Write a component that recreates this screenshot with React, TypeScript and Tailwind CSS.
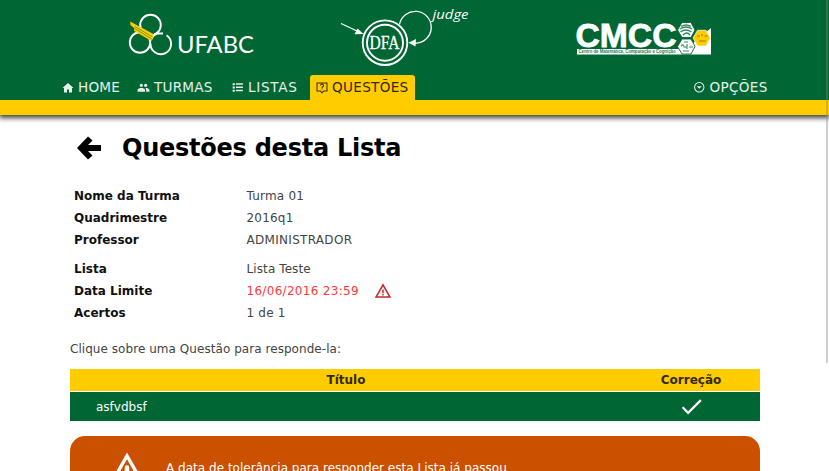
import type { ReactNode } from "react";

function UfabcLogo() {
  return (
    <svg className="block h-[50px] w-[140px]" viewBox="0 0 140 50" fill="none">
      <g stroke="#fff" strokeWidth="1.9">
        <circle cx="30.500" cy="16" r="10.300" />
        <circle cx="20" cy="33.500" r="10.200" />
        <path d="M43 24.500 H37 A10.400 10.400 0 0 0 31 31 M30.500 34.500 A10.300 10.300 0 1 0 46.500 26.300" />
      </g>
      <path d="M10.200 12.600 L33.800 25.200 L31.400 32 L14.200 22 L14 19 L10.500 16 Z" fill="#fc0" />
      <path d="M14.500 19.300 L31.500 30 M14.500 17.300 L32.500 28" stroke="#063" strokeWidth=".5" />
      <text x="57" y="44" fill="#fff" fontFamily="Lato, sans-serif" fontSize="24" textLength="77" lengthAdjust="spacingAndGlyphs">UFABC</text>
    </svg>
  );
}

function JudgeLogo() {
  return (
    <svg className="block h-[70px] w-[140px]" viewBox="0 0 140 70" fill="none">
      <circle cx="45" cy="42.7" r="22.3" stroke="#fff" strokeWidth="1.9" />
      <circle cx="45" cy="42.7" r="18" stroke="#fff" strokeWidth="1.9" />
      <path d="M1 23.500 L17 31 M59.500 24.500 A16 16 0 1 1 75 43.300" stroke="#fff" strokeWidth="1.3" />
      <path d="M23.500 34 L14.500 34.300 L17.500 28.500 Z M68.500 42.800 L76 39 L75.500 46.500 Z" fill="#fff" />
      <text x="44.500" y="49.300" textAnchor="middle" fill="#fff" stroke="#fff" strokeWidth=".3" fontFamily="Liberation Serif, serif" fontSize="19" textLength="30" lengthAdjust="spacingAndGlyphs">DFA</text>
      <text x="92.500" y="18.500" fill="#fff" fontFamily="Open Sans, sans-serif" fontStyle="italic" fontSize="13.5" textLength="36" lengthAdjust="spacingAndGlyphs">judge</text>
    </svg>
  );
}

function CmccLogo() {
  return (
    <svg className="block h-[34px] w-[136px]" viewBox="0 0 136 34" fill="none">
      <path d="M1 27 H110 L135 6 V32.500 H1 Z" fill="#fff" />
      <text x="-.5" y="24.800" fill="#fff" stroke="#fff" strokeWidth=".8" fontFamily="Liberation Sans, sans-serif" fontWeight="700" fontSize="33" textLength="101" lengthAdjust="spacingAndGlyphs">CMCC</text>
      <path d="M101.500 8 L106 .5 H115 L119 8 L115 15.500 H106 Z M101.500 24.500 L106 17 H115 L119 24.500 L115 32 H106 Z" fill="#fff" stroke="#063" strokeWidth=".9" />
      <path d="M117 16 L121.500 8.300 H130 L134.500 16 L130 24 H121.500 Z" fill="#fc0" stroke="#fff" strokeWidth=".7" />
      <path d="M105 4.500 q5-3 10 0 M104 7 q6-4 12 0 M104.500 10 q5-4 11 0 M107 13 q4-4 7 0" stroke="#358861" strokeWidth="1.3" />
      <path d="M121 14 h3 M125 13 h2 M128.500 14 h3 M123 19 h7" stroke="#785f08" strokeWidth=".8" />
      <path d="M105 24 q3-3 3 1 h3 M108 20 h4 M111 22 v5 M113 25 h4 M107 29 h6" stroke="#358861" strokeWidth="1.1" />
      <text x="2.500" y="31.400" fill="#287b50" fontFamily="Liberation Sans, sans-serif" fontWeight="700" fontSize="4.8" textLength="97" lengthAdjust="spacingAndGlyphs">Centro de Matemática, Computação e Cognição</text>
    </svg>
  );
}

function Glyph({ d, className }: { d: string; className: string }) {
  return (
    <svg viewBox="0 0 24 24" fill="currentColor" className={`block shrink-0 ${className}`}>
      <path d={d} fillRule="evenodd" />
    </svg>
  );
}

const icons = {
  home: "M10 21v-6h4v6h6v-9h3L12 2 1 12h3v9z",
  people: "M16 11c1.660 0 2.990-1.340 2.990-3S17.660 5 16 5s-3 1.340-3 3 1.340 3 3 3zm-8 0c1.660 0 2.990-1.340 2.990-3S9.660 5 8 5 5 6.340 5 8s1.340 3 3 3zm0 2c-2.330 0-7 1.170-7 3.500V20h14v-3.500C15 14.170 10.330 13 8 13zm8 0c-.29 0-.62.020-.97.050 1.160.84 1.970 1.970 1.970 3.450V20h6v-3.500C23 14.170 18.330 13 16 13z",
  list: "M3 4h4v4H3zm6 0h13v3H9zM3 10h4v4H3zm6 0h13v3H9zM3 16h4v4H3zm6 0h13v3H9z",
  question: "M1 1h22v18h-7l-4 4-4-4H1zM3 3v14h6l3 3 3-3h6V3zM11 13h2v2h-2zM11 12c0-3 3-3 3-5 0-2-4-2-4 0H8c0-5 8-5 8 0 0 3-3 3-3 5z",
  down: "M12 2a10 10 0 1 0 0 20 10 10 0 0 0 0-20zm0 2a8 8 0 1 1 0 16 8 8 0 0 1 0-16zM7 10l5 5 5-5z",
  warning: "M12 1.500 1 21h22zM12 6l7.500 13h-15zM11 10h2v5h-2zm0 6h2v2h-2z",
  alert: "M12 1 0 22h24zM12 5.500 20 19.500H4zM12 9.500a1.500 1.500 0 0 1 1.500 1.500v3h-3v-3A1.500 1.500 0 0 1 12 9.500zM10.500 16h3v2h-3z",
  check: "M9 16.170 4.830 12l-1.420 1.410L9 19 21 7l-1.410-1.410z",
};

function InfoRow({ label, children }: { label: string; children: ReactNode }) {
  return (
    <div className="flex h-[22px] items-center">
      <dt className="w-[172.500px] text-[12px] font-bold text-[#111]">{label}</dt>
      <dd className="flex items-center text-[12px] tracking-[0.2px] text-[#444]">{children}</dd>
    </div>
  );
}

export default function App() {
  return (
    <div className="relative h-[471px] w-[829px] overflow-hidden bg-white font-['DejaVu_Sans',sans-serif] whitespace-nowrap">
      <header className="h-[115px] border-b-[15px] border-[#fc0] bg-[#063] shadow-[0_2px_5px_1px_rgba(0,0,0,0.75)]">
        <div className="flex h-[70px] items-start pl-[120px]">
          <div className="pt-[9px]"><UfabcLogo /></div>
          <div className="ml-[80px]"><JudgeLogo /></div>
          <div className="ml-[96px] pt-[22px]"><CmccLogo /></div>
        </div>
        <nav className="flex h-[30px] items-end pl-[62px] text-[13.600px] tracking-[0.2px] text-white/90">
          <a className="flex h-[25px] w-[75px] items-center gap-[4px]"><Glyph d={icons.home} className="size-[12px]" /><span>HOME</span></a>
          <a className="flex h-[25px] w-[94px] items-center gap-[4px]"><Glyph d={icons.people} className="size-[13px]" /><span>TURMAS</span></a>
          <a className="flex h-[25px] w-[79px] items-center gap-[4px]"><Glyph d={icons.list} className="size-[13px]" /><span className="tracking-[0.7px]">LISTAS</span></a>
          <a className="flex h-[25px] w-[105px] items-center gap-[4px] rounded-t-[3px] bg-[#fc0] pl-[6px] tracking-[0.3px] text-[#332900]"><Glyph d={icons.question} className="size-[12px]" /><span>QUESTÕES</span></a>
          <a className="ml-[278px] flex h-[25px] items-center gap-[4px]"><Glyph d={icons.down} className="size-[12.500px]" /><span className="tracking-[0.3px]">OPÇÕES</span></a>
        </nav>
      </header>
      <main className="ml-[70px] w-[690px]">
        <h1 className="flex h-[70px] items-center pl-[7px] text-[24px] font-bold text-black">
          <svg viewBox="0 0 24 24" className="mt-[-4px] block size-6"><path d="M0 12 11 .5 15.500 4.500 11 9H24V15H11L15.500 19.500 11 23.500Z" fill="currentColor" /></svg>
          <span className="mt-[-4px] ml-[21px] tracking-[-0.250px]">Questões desta Lista</span>
        </h1>
        <dl className="pl-[4px]">
          <InfoRow label="Nome da Turma">Turma 01</InfoRow>
          <InfoRow label="Quadrimestre">2016q1</InfoRow>
          <InfoRow label="Professor"><span className="tracking-[0.300px]">ADMINISTRADOR</span></InfoRow>
        </dl>
        <dl className="mt-[7px] pl-[4px]">
          <InfoRow label="Lista"><span className="tracking-[0.1px]">Lista Teste</span></InfoRow>
          <InfoRow label="Data Limite"><span className="tracking-[0.300px] text-[#ff3838]">16/06/2016 23:59</span><Glyph d={icons.warning} className="ml-[15.500px] size-[18px] text-[#c62828]" /></InfoRow>
          <InfoRow label="Acertos">1 de 1</InfoRow>
        </dl>
        <p className="mt-[16px] h-[18px] text-[12px] leading-[18px] tracking-[0.050px] text-[#444]">Clique sobre uma Questão para responde-la:</p>
        <div className="mt-[11px] grid h-[22px] grid-cols-[552px_138px] items-center bg-[#fc0] text-center text-[12px] font-bold text-[#332900]"><span>Título</span><span>Correção</span></div>
        <div className="mt-px grid h-[29px] grid-cols-[552px_138px] items-center bg-[#063] text-[12px] text-white"><span className="pl-[26px]">asfvdbsf</span><Glyph d={icons.check} className="mx-auto size-[27px]" /></div>
        <section className="mt-[15px] flex h-[90px] rounded-[15px] bg-[#cb5000] text-[12px] text-white">
          <Glyph d={icons.alert} className="mt-[15px] ml-[39px] size-[36px]" />
          <p className="mt-[23px] ml-[21px] h-[18px] leading-[18px] tracking-[0.020px]">A data de tolerância para responder esta Lista já passou</p>
        </section>
      </main>
      <div className="absolute top-0 right-[1px] h-[363px] w-[2px] bg-[#888]/40" />
    </div>
  );
}
